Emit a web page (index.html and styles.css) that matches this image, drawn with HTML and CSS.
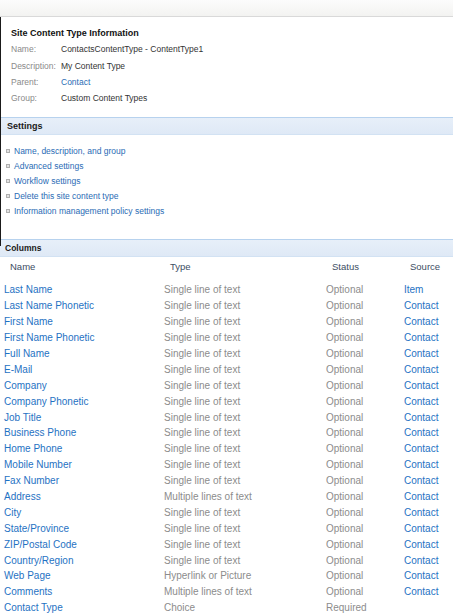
FILE: index.html
```html
<!DOCTYPE html>
<html>
<head>
<meta charset="utf-8">
<link rel="stylesheet" href="styles.css">
</head>
<body>
<div class="topbar"></div>
<div class="framed">
  <section class="info">
    <h1 class="title">Site Content Type Information</h1>
    <div class="info-row"><span class="label">Name:</span><span class="value">ContactsContentType - ContentType1</span></div>
    <div class="info-row"><span class="label">Description:</span><span class="value">My Content Type</span></div>
    <div class="info-row"><span class="label">Parent:</span><a class="value link">Contact</a></div>
    <div class="info-row"><span class="label">Group:</span><span class="value">Custom Content Types</span></div>
  </section>
  <div class="band settings-band">Settings</div>
  <ul class="settings">
    <li><span class="bullet"></span><a class="slink">Name, description, and group</a></li>
    <li><span class="bullet"></span><a class="slink">Advanced settings</a></li>
    <li><span class="bullet"></span><a class="slink">Workflow settings</a></li>
    <li><span class="bullet"></span><a class="slink">Delete this site content type</a></li>
    <li><span class="bullet"></span><a class="slink">Information management policy settings</a></li>
  </ul>
</div>
<div class="band columns-band">Columns</div>
<div class="cols">
  <div class="row head"><span>Name</span><span>Type</span><span>Status</span><span>Source</span></div>
  <div class="row"><a>Last Name</a><span>Single line of text</span><span>Optional</span><a>Item</a></div>
  <div class="row"><a>Last Name Phonetic</a><span>Single line of text</span><span>Optional</span><a>Contact</a></div>
  <div class="row"><a>First Name</a><span>Single line of text</span><span>Optional</span><a>Contact</a></div>
  <div class="row"><a>First Name Phonetic</a><span>Single line of text</span><span>Optional</span><a>Contact</a></div>
  <div class="row"><a>Full Name</a><span>Single line of text</span><span>Optional</span><a>Contact</a></div>
  <div class="row"><a>E-Mail</a><span>Single line of text</span><span>Optional</span><a>Contact</a></div>
  <div class="row"><a>Company</a><span>Single line of text</span><span>Optional</span><a>Contact</a></div>
  <div class="row"><a>Company Phonetic</a><span>Single line of text</span><span>Optional</span><a>Contact</a></div>
  <div class="row"><a>Job Title</a><span>Single line of text</span><span>Optional</span><a>Contact</a></div>
  <div class="row"><a>Business Phone</a><span>Single line of text</span><span>Optional</span><a>Contact</a></div>
  <div class="row"><a>Home Phone</a><span>Single line of text</span><span>Optional</span><a>Contact</a></div>
  <div class="row"><a>Mobile Number</a><span>Single line of text</span><span>Optional</span><a>Contact</a></div>
  <div class="row"><a>Fax Number</a><span>Single line of text</span><span>Optional</span><a>Contact</a></div>
  <div class="row"><a>Address</a><span>Multiple lines of text</span><span>Optional</span><a>Contact</a></div>
  <div class="row"><a>City</a><span>Single line of text</span><span>Optional</span><a>Contact</a></div>
  <div class="row"><a>State/Province</a><span>Single line of text</span><span>Optional</span><a>Contact</a></div>
  <div class="row"><a>ZIP/Postal Code</a><span>Single line of text</span><span>Optional</span><a>Contact</a></div>
  <div class="row"><a>Country/Region</a><span>Single line of text</span><span>Optional</span><a>Contact</a></div>
  <div class="row"><a>Web Page</a><span>Hyperlink or Picture</span><span>Optional</span><a>Contact</a></div>
  <div class="row"><a>Comments</a><span>Multiple lines of text</span><span>Optional</span><a>Contact</a></div>
  <div class="row"><a>Contact Type</a><span>Choice</span><span>Required</span><span></span></div>
</div>
</body>
</html>
```
FILE: styles.css
```css
html, body {
  margin: 0;
  padding: 0;
  background: #fff;
  font-family: "Liberation Sans", Arial, sans-serif;
}
.topbar {
  height: 16px;
  background: linear-gradient(#fcfcfc, #f3f3f1);
  border-bottom: 1px solid #d9d9d9;
}
.framed {
  border-left: 1px solid #1a1a1a;
}
.info {
  padding: 10px 0 0 10px;
  height: 100px;
  box-sizing: border-box;
}
.title {
  margin: 0 0 2px 0;
  font-size: 9px;
  font-weight: bold;
  color: #111;
  line-height: 12px;
}
.info-row {
  display: flex;
  height: 16.4px;
  align-items: center;
  font-size: 8.5px;
}
.label {
  width: 50px;
  color: #8a8a8a;
}
.value {
  color: #333;
}
.link {
  color: #2a6db5;
}
.band {
  height: 18px;
  display: flex;
  align-items: center;
  font-size: 9px;
  font-weight: bold;
  color: #1a1a1a;
  background: linear-gradient(#e7eff9, #dfe9f6);
  border-top: 1px solid #b7d2ee;
  border-bottom: 1px solid #d2e2f3;
  box-sizing: border-box;
}
.settings-band {
  padding-left: 6px;
}
.settings {
  list-style: none;
  margin: 0;
  padding: 8px 0 0 5px;
  height: 104px;
  box-sizing: border-box;
}
.settings li {
  display: flex;
  align-items: center;
  height: 15.2px;
  font-size: 8.5px;
}
.bullet {
  width: 2px;
  height: 2px;
  border: 1px solid #b0b0b0;
  background: #e4e4e4;
  margin-right: 4px;
}
.slink {
  color: #2a6cb5;
}
.columns-band {
  position: relative;
  padding-left: 5px;
  font-size: 8.5px;
}
.columns-band::before {
  content: "";
  position: absolute;
  left: 0;
  top: -1px;
  width: 1px;
  height: 7px;
  background: #1a1a1a;
}
.cols {
  font-size: 10px;
}
.row {
  display: grid;
  grid-template-columns: 160px 162px 78px 1fr;
  height: 15.9px;
  align-items: center;
  padding-left: 4px;
  color: #8c8c8c;
}
.row a {
  color: #1f72c3;
}
.row.head {
  height: 25px;
  align-items: start;
  padding-top: 4px;
  box-sizing: border-box;
  color: #3c4d63;
  font-size: 9.5px;
}
.row.head span {
  padding-left: 6px;
}
```
